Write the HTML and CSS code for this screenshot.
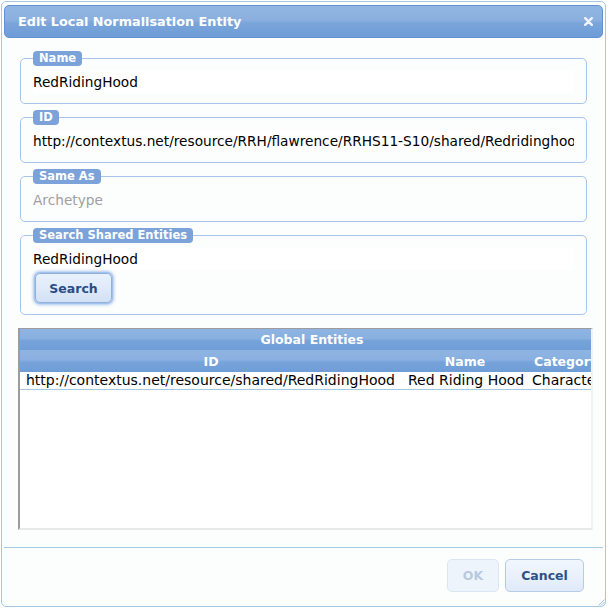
FILE: index.html
```html
<!DOCTYPE html>
<html>
<head>
<meta charset="utf-8">
<title>Edit Local Normalisation Entity</title>
<link rel="stylesheet" href="styles.css">
</head>
<body>
<div class="dialog">
  <div class="titlebar">
    <span class="title">Edit Local Normalisation Entity</span>
    <span class="close"><svg width="9" height="9" viewBox="0 0 9 9"><path d="M1.2 1.2L7.8 7.8M7.8 1.2L1.2 7.8" stroke="#eef3fa" stroke-width="2.4" stroke-linecap="round"/></svg></span>
  </div>
  <div class="content">
    <fieldset class="group">
      <legend>Name</legend>
      <div class="field">RedRidingHood</div>
    </fieldset>
    <fieldset class="group">
      <legend>ID</legend>
      <div class="field">http://contextus.net/resource/RRH/flawrence/RRHS11-S10/shared/Redridinghood</div>
    </fieldset>
    <fieldset class="group">
      <legend>Same As</legend>
      <div class="field placeholder">Archetype</div>
    </fieldset>
    <fieldset class="group search">
      <legend>Search Shared Entities</legend>
      <div class="field">RedRidingHood</div>
      <button class="btn search-btn">Search</button>
    </fieldset>
    <div class="grid">
      <table>
        <colgroup><col class="c-id"><col class="c-name"><col class="c-cat"></colgroup>
        <thead>
          <tr class="caption"><th colspan="3">Global Entities</th></tr>
          <tr class="cols"><th>ID</th><th>Name</th><th>Category</th></tr>
        </thead>
        <tbody>
          <tr class="row"><td class="id">http://contextus.net/resource/shared/RedRidingHood</td><td class="nm">Red Riding Hood</td><td class="cat">Character</td></tr>
        </tbody>
      </table>
    </div>
  </div>
  <div class="buttonpane">
    <button class="btn ok" disabled>OK</button>
    <button class="btn cancel">Cancel</button>
  </div>
  <svg class="resize" width="8" height="8" viewBox="0 0 8 8"><path d="M7.5 1.5L1.5 7.5M7.5 4L4 7.5M7.5 6.5L6.5 7.5" stroke="#8fb2dc" stroke-width="0.8"/></svg>
</div>
</body>
</html>
```

FILE: styles.css
```css
body {
  margin: 0;
  background: #ffffff;
  font-family: "DejaVu Sans", sans-serif;
}

.dialog {
  position: relative;
  box-sizing: border-box;
  width: 605px;
  height: 606px;
  margin: 1px 0 0 1px;
  border: 1px solid #a6c9e2;
  border-radius: 5px;
  background: #fcfdfd;
  padding: 3px 2px;
  display: flex;
  flex-direction: column;
}

.titlebar {
  box-sizing: border-box;
  height: 33px;
  flex: none;
  border: 1px solid #5e92d2;
  border-radius: 5px;
  background: linear-gradient(to bottom, #92b6e2 0%, #8bb0df 45%, #7aa5db 55%, #6f9cd7 100%);
  display: flex;
  align-items: center;
  justify-content: space-between;
  padding: 0 9px 0 13px;
}

.title {
  color: #ffffff;
  font-weight: bold;
  font-size: 12.8px;
}

.close {
  display: flex;
  width: 9px;
  height: 9px;
}

.content {
  flex: 1;
  padding: 13px 16px 0;
}

.group {
  margin: 0 0 6px;
  border: 1px solid #a9c6e8;
  border-radius: 5px;
  padding: 5px 12px 10px;
  min-width: 0;
}

.group legend {
  padding: 0 6px;
  height: 15px;
  line-height: 15px;
  font-size: 11.5px;
  font-weight: bold;
  color: #ffffff;
  background: #7ba2d9;
  border-radius: 4px;
}

.field {
  height: 22px;
  line-height: 22px;
  font-size: 13.7px;
  color: #000000;
  white-space: nowrap;
  overflow: hidden;
  background: #ffffff;
}

.field.placeholder {
  color: #a0a0a0;
  background: transparent;
}

.group.search {
  margin-bottom: 13px;
  padding-bottom: 11px;
}

.btn {
  box-sizing: border-box;
  font-family: "DejaVu Sans", sans-serif;
  font-weight: bold;
  font-size: 12.5px;
  color: #2d5088;
  border: 1px solid #b5cbe8;
  border-radius: 5px;
  background: linear-gradient(to bottom, #f2f7fe 0%, #eaf1fc 50%, #dfe9f8 100%);
  padding: 0;
  height: 33px;
}

.search-btn {
  display: block;
  margin: 3px 0 0 2px;
  width: 77px;
  height: 30px;
  border-color: #8eb1de;
  background: linear-gradient(to bottom, #e9f1fc 0%, #dfeafa 50%, #d2e1f5 100%);
  box-shadow: 0 0 0 1px #a3c1ea, 0 0 3px 2px #aac7ee;
  color: #2a4c82;
}

.grid {
  box-sizing: border-box;
  width: 575px;
  height: 202px;
  margin-left: -2px;
  border-top: 1px solid #9c9c9c;
  border-left: 2px solid #9c9c9c;
  border-right: 2px solid #f2f2f2;
  border-bottom: 2px solid #e8e8e8;
  background: #ffffff;
  overflow: hidden;
}

.grid table {
  border-collapse: collapse;
  table-layout: fixed;
  width: 584px;
}

.c-id { width: 382px; }
.c-name { width: 126px; }
.c-cat { width: 76px; }

.grid th {
  color: #ffffff;
  font-weight: bold;
  font-size: 12.5px;
  text-align: center;
  padding: 0;
  white-space: nowrap;
  overflow: hidden;
  background: linear-gradient(to bottom, #8fb4e2 0%, #89b0e0 45%, #77a3da 55%, #6f9dd7 100%);
}

.caption th { height: 21px; }
.cols th { height: 22px; }

.grid td {
  height: 17px;
  font-size: 14px;
  color: #000000;
  white-space: nowrap;
  overflow: hidden;
  border-bottom: 1px solid #a6c9e2;
  padding: 0 0 0 6px;
  line-height: 17px;
}

.grid td.cat { padding-left: 4px; }

.buttonpane {
  flex: none;
  border-top: 1px solid #a6c9e2;
  height: 56px;
  box-sizing: border-box;
  padding: 11px 19px 0 0;
  display: flex;
  justify-content: flex-end;
  align-items: flex-start;
  gap: 6px;
}

.btn.ok {
  width: 52px;
  color: #b9c9de;
  border-color: #dbe6f5;
  background: #eef4fc;
}

.btn.cancel {
  width: 79px;
}

.resize {
  position: absolute;
  right: 0;
  bottom: 0;
}
```
